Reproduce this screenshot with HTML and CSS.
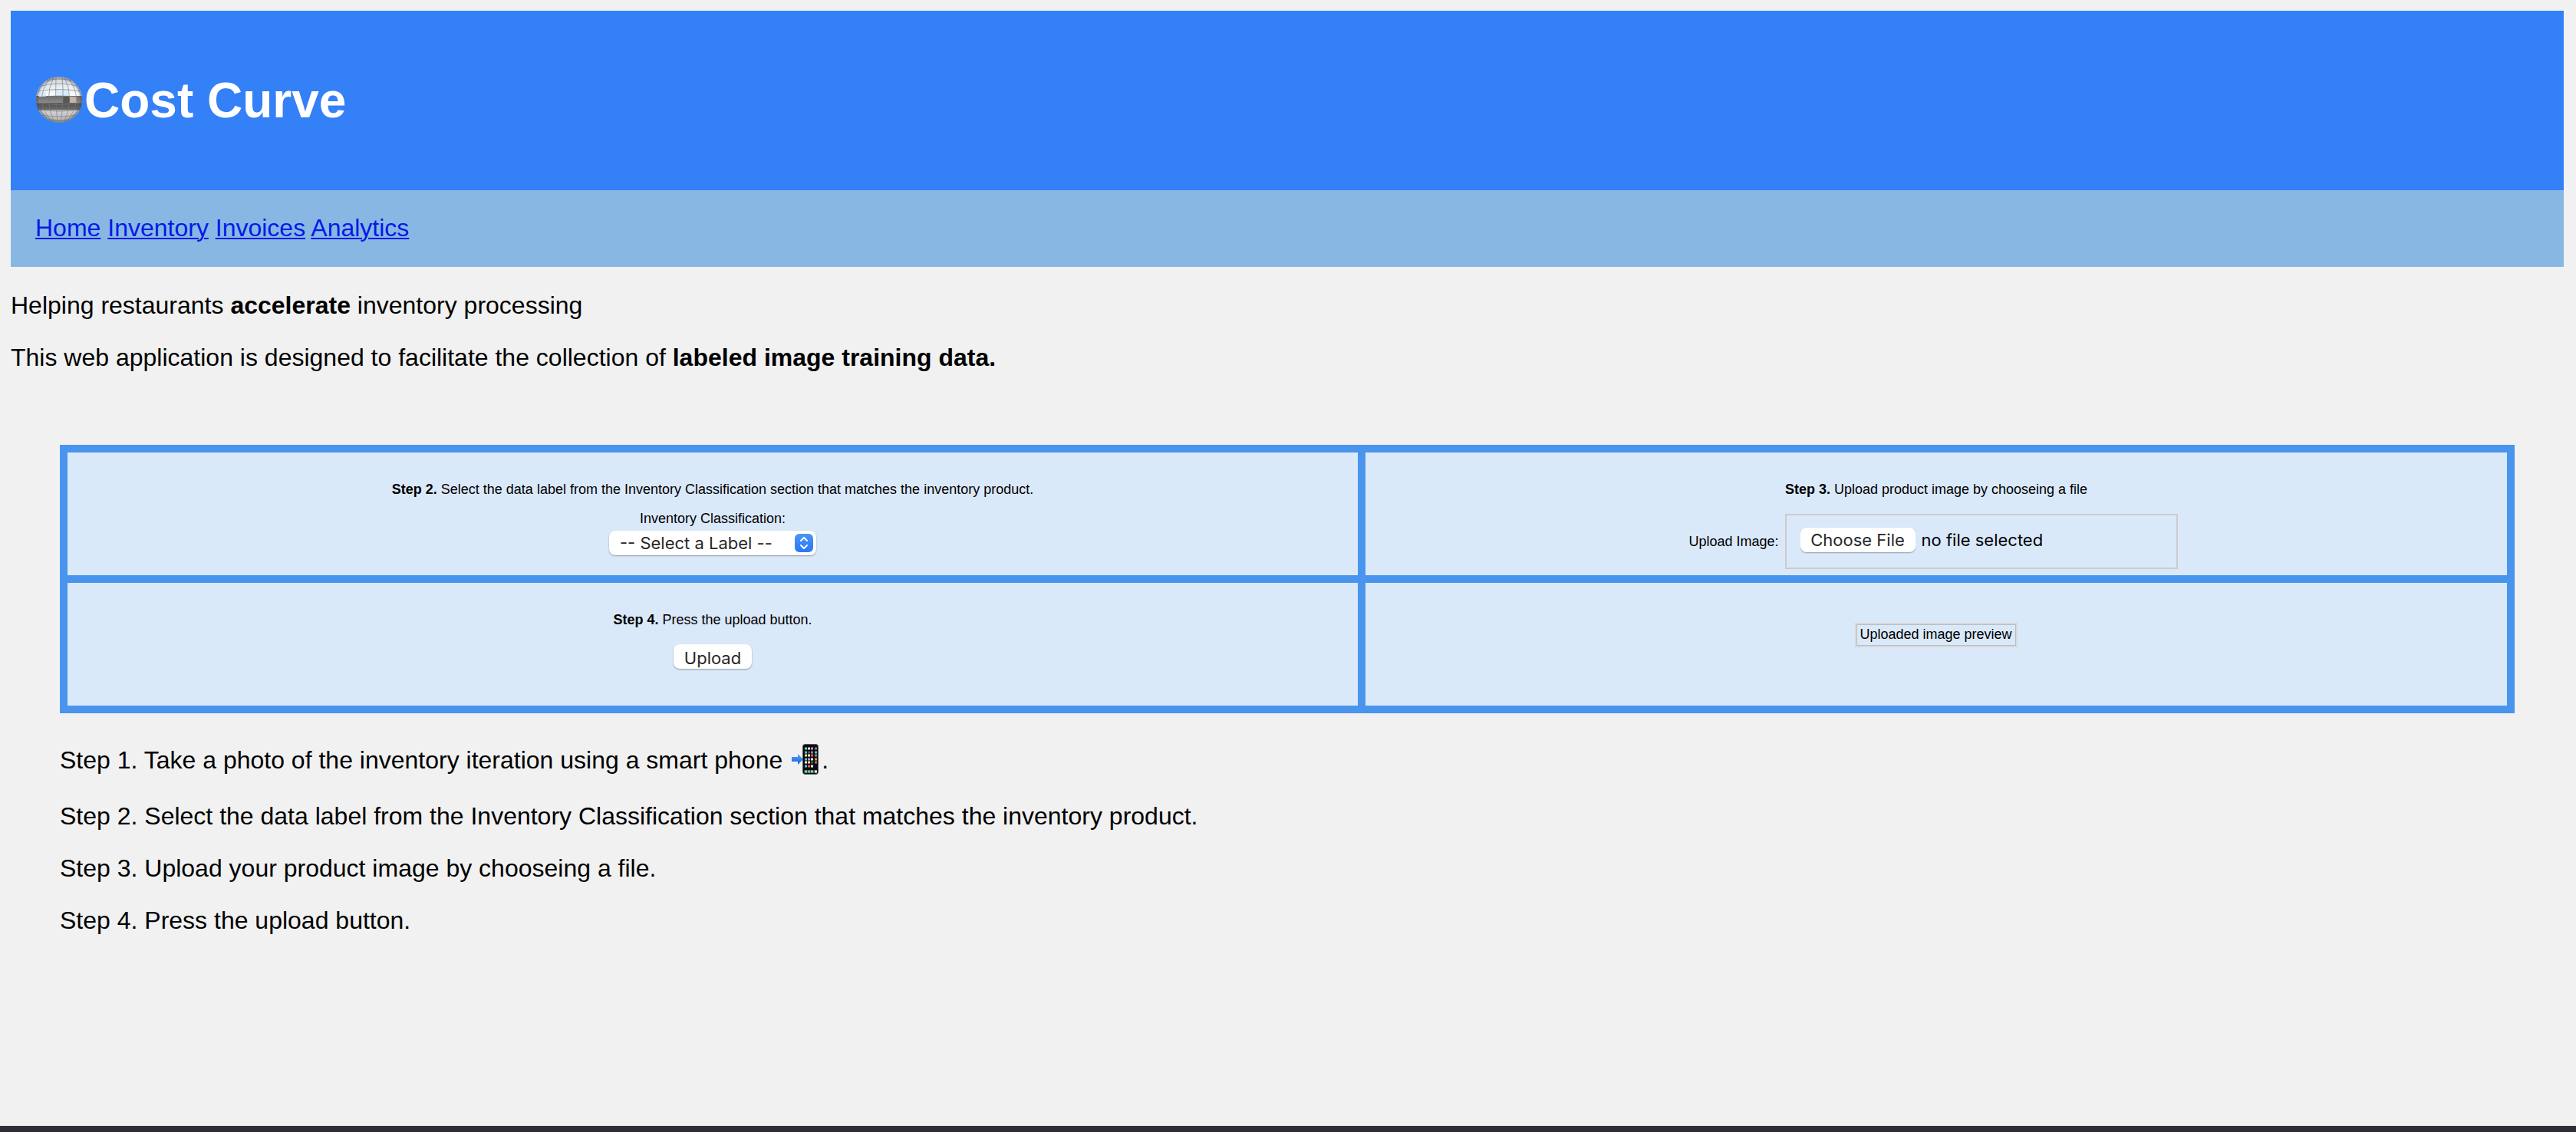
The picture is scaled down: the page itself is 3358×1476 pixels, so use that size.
FILE: index.html
```html
<!DOCTYPE html>
<html lang="en">
<head>
<meta charset="utf-8">
<title>Cost Curve</title>
<link rel="stylesheet" href="styles.css">
</head>
<body>
<div class="page">
  <header class="banner">
    <h1 class="brand">
      <svg class="mirror-ball" viewBox="0 0 64 64" aria-hidden="true">
        <defs>
          <clipPath id="ball"><circle cx="31" cy="31" r="30"/></clipPath>
          <linearGradient id="shine" x1="0" y1="0" x2="0" y2="1">
            <stop offset="0" stop-color="#c6cacd"/>
            <stop offset=".2" stop-color="#e6ebef"/>
            <stop offset=".4" stop-color="#fafdff"/>
            <stop offset=".41" stop-color="#6b6b6b"/>
            <stop offset=".54" stop-color="#8a8a8a"/>
            <stop offset=".56" stop-color="#505050"/>
            <stop offset=".69" stop-color="#6a6a6a"/>
            <stop offset=".7" stop-color="#d4d4d4"/>
            <stop offset="1" stop-color="#a8a8a8"/>
          </linearGradient>
          <radialGradient id="edge">
            <stop offset=".85" stop-color="#333" stop-opacity="0"/>
            <stop offset="1" stop-color="#333" stop-opacity=".4"/>
          </radialGradient>
        </defs>
        <g clip-path="url(#ball)">
          <rect width="64" height="64" fill="url(#shine)"/>
          <path d="M27 18h16v8H27zM5 21h9v6H5zM11 12h8v5h-8z" fill="#d8ebfa"/>
          <path d="M45 27h9v8h-9z" fill="#c9b5a6"/>
          <path d="M36 27h9v8H36z" fill="#595553"/>
          <g fill="none" stroke="#777b7f" stroke-width=".8" stroke-opacity=".8">
            <path d="M15 6q16-4 32 0M8 13q23-6 46 0M4 20q27-5 54 0M1 28q30-4 60 0M1 36q30 3 60 0M4 44q27 4 54 0M9 51q22 4 44 0M17 57q14 3 28 0"/>
            <path d="M27 1q-2 30 2 60M35 1q3 30-2 60M24 1q-14 30 1 60M38 1q14 30-1 60M20 2q-24 29 2 58M42 2q24 29-2 58M14 5q-25 26 4 54M48 5q25 26-4 54"/>
          </g>
          <circle cx="31" cy="31" r="30" fill="url(#edge)"/>
        </g>
      </svg>Cost Curve</h1>
  </header>
  <nav class="menu">
    <a href="#">Home</a>
    <a href="#">Inventory</a>
    <a href="#">Invoices</a>
    <a href="#">Analytics</a>
  </nav>
  <main>
    <p>Helping restaurants <b>accelerate</b> inventory processing</p>
    <p>This web application is designed to facilitate the collection of <b>labeled image training data.</b></p>
    <form class="board">
      <section class="cell">
        <p class="hint"><b>Step 2.</b> Select the data label from the Inventory Classification section that matches the inventory product.</p>
        <label for="classification">Inventory Classification:</label>
        <div class="picker">
          <select id="classification" class="control">
            <option>-- Select a Label --</option>
          </select>
          <svg class="picker-arrows" viewBox="0 0 24 24" aria-hidden="true">
            <defs><linearGradient id="blue" x1="0" y1="0" x2="0" y2="1"><stop offset="0" stop-color="#4a95f9"/><stop offset="1" stop-color="#2a76f6"/></linearGradient></defs>
            <rect width="24" height="24" rx="6" fill="url(#blue)"/>
            <path d="M8 9l4-4 4 4M8 15l4 4 4-4" fill="none" stroke="#fff" stroke-width="2" stroke-linecap="round" stroke-linejoin="round"/>
          </svg>
        </div>
      </section>
      <section class="cell">
        <p class="hint"><b>Step 3.</b> Upload product image by chooseing a file</p>
        <div class="upload">
          <label for="photo">Upload Image:</label>
          <div class="file-box">
            <input id="photo" class="file" type="file">
            <span class="file-name">no file selected</span>
          </div>
        </div>
      </section>
      <section class="cell">
        <p class="hint"><b>Step 4.</b> Press the upload button.</p>
        <button class="control submit" type="button">Upload</button>
      </section>
      <section class="cell preview-cell">
        <div class="preview"><span class="preview-text">Uploaded image preview</span></div>
      </section>
    </form>
    <div class="steps">
      <p class="with-icon">Step 1. Take a photo of the inventory iteration using a smart phone <svg class="phone" viewBox="0 0 40 40" aria-hidden="true">
        <defs><linearGradient id="arrow" x1="0" y1="0" x2="0" y2="1"><stop offset="0" stop-color="#55a5fa"/><stop offset="1" stop-color="#1b5cdd"/></linearGradient></defs>
        <path d="M1 17h8v-4l7 7-7 7v-4H1z" fill="url(#arrow)"/>
        <rect x="15.500" y=".5" width="20" height="39" rx="3" fill="#0b0b0c" stroke="#55585b"/>
        <rect x="17" y="34" width="17" height="4" rx="1" fill="#3c4043"/>
        <g fill="none" stroke-width="3" transform="translate(-1 0)">
          <path d="M19 6h3M19 36h3" stroke="#6be06b"/><path d="M23 6h3M27 20h3" stroke="#e6e6ea"/><path d="M27 6h3M23 20h3" stroke="#c98be8"/><path d="M32 6h3M27 11h3M32 15h3M32 24h3" stroke="#85898c"/>
          <path d="M19 11h3M32 11h3M19 20h3M19 29h3M23 36h3" stroke="#50bdf2"/><path d="M23 11h3M27 24h3" stroke="#54504e"/><path d="M19 15h3M23 24h3" stroke="#f5df60"/><path d="M23 15h3M19 24h3M27 29h3M32 36h3" stroke="#f4f4f4"/>
          <path d="M27 15h3M23 29h3" stroke="#ec5b50"/><path d="M32 20h3" stroke="#f59a2f"/><path d="M27 36h3" stroke="#7be07b"/>
        </g>
      </svg>.</p>
      <p>Step 2. Select the data label from the Inventory Classification section that matches the inventory product.</p>
      <p>Step 3. Upload your product image by chooseing a file.</p>
      <p>Step 4. Press the upload button.</p>
    </div>
  </main>
</div>
<div class="bottom-edge"></div>
</body>
</html>
```
FILE: styles.css
```css
* { box-sizing: border-box; }

body {
  margin: 0;
  min-height: 100vh;
  display: flex;
  flex-direction: column;
  background: #f1f1f1;
  color: #000;
  font: 32px/36px "Liberation Sans", Arial, Helvetica, sans-serif;
}

p { margin: 32px 0; }

.page { flex: 1; padding: 14px 16px 0 14px; }

.banner { padding: 80px 32px; background: #3380f7; }

.brand {
  display: flex;
  align-items: center;
  margin: 0;
  color: #fff;
  font-size: 64px;
  line-height: 74px;
}

.mirror-ball { width: 64px; height: 64px; }

.menu { padding: 31px 32px 33px; background: #89b7e4; }
.menu a { color: #001be8; text-decoration-thickness: 2px; text-underline-offset: 2px; }

.board {
  display: grid;
  grid-template-columns: 841fr 744fr;
  grid-auto-rows: minmax(160px, auto);
  gap: 10px;
  margin: 96px 64px 0;
  padding: 10px;
  background: #4995ed;
  font-size: 18px;
  line-height: 20px;
}

.cell {
  display: flex;
  flex-direction: column;
  align-items: center;
  padding: 38px 8px 8px;
  background: #dae9fa;
}

.hint { margin: 0 0 18px; }

.control {
  height: 32px;
  border: 0;
  border-radius: 8px;
  background: #fff;
  box-shadow: 0 1px 2px rgba(0, 0, 0, .35);
  color: #262626;
  font: 22px/32px Inter, sans-serif;
}

.picker { display: grid; align-items: center; margin-top: 6px; }
.picker .control {
  grid-area: 1 / 1;
  appearance: none;
  width: 270px;
  padding: 0 46px 0 14px;
}
.picker-arrows {
  grid-area: 1 / 1;
  justify-self: end;
  width: 24px;
  height: 24px;
  margin-right: 4px;
  pointer-events: none;
}

.cell:has(.upload) { padding-bottom: 0; }
.upload { display: flex; align-items: center; gap: 8px; margin-top: 4px; padding-right: 8px; }

.file-box {
  display: flex;
  align-items: center;
  gap: 8px;
  width: 512px;
  height: 72px;
  padding: 0 18px 4px;
  border: 2px solid #ccc;
  font: 22px/32px Inter, sans-serif;
}

.file { width: 150px; height: 36px; padding: 2px 0; color: transparent; font: inherit; }
.file::file-selector-button {
  width: 150px;
  height: 32px;
  margin: 0;
  padding: 0;
  border: 0;
  border-radius: 8px;
  background: #fff;
  box-shadow: 0 1px 2px rgba(0, 0, 0, .35);
  color: #262626;
  font: inherit;
}

.submit { width: 102px; margin-top: 4px; padding: 2px 0 0; }

.preview-cell { padding-top: 52px; }
.preview { border: 2px solid #d9d9d9; }
.preview-text { display: block; padding: 2px 4px 4px 3px; border: 1px solid #b9bdc1; }

.steps { margin: 38px 64px 0; }
.with-icon { margin-top: 0; line-height: 46px; }
.phone { width: 40px; height: 40px; margin-left: 2px; vertical-align: -8px; }

.bottom-edge { height: 8px; background: linear-gradient(#2d3135, #302a3a); }
```
